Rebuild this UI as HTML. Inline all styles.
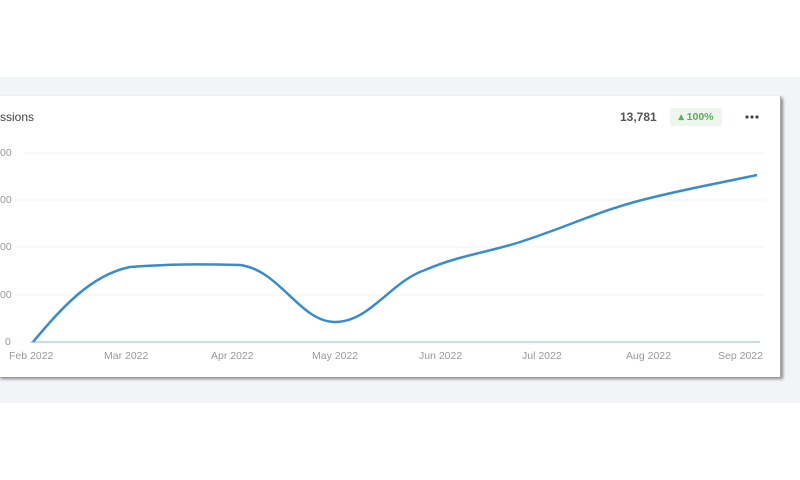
<!DOCTYPE html>
<html><head><style>
body{margin:0;width:800px;height:480px;background:#fff;position:relative;overflow:hidden;font-family:"Liberation Sans",sans-serif}
.band{position:absolute;left:0;top:77px;width:800px;height:326px;background:#f1f5f8}
.card{position:absolute;left:-2px;top:96px;width:782px;height:281px;background:#fff;box-shadow:2px 2px 3px #888;border-right:1px solid #aaa}
.t{position:absolute;font-size:12px;color:#444}
.ax{position:absolute;font-size:10.5px;color:#999}
</style></head><body>
<div class="band"></div>
<div class="card"></div>
<div class="t" style="left:0;top:110px">ssions</div>
<div class="t" style="left:620px;top:110px;font-weight:bold;color:#555">13,781</div>
<div style="position:absolute;left:670px;top:108px;width:52px;height:18px;background:#eef6ee;border-radius:2px;font-size:10.5px;color:#5cae5c;font-weight:bold;line-height:18px;text-align:center">▴ 100%</div>
<svg style="position:absolute;left:744px;top:114px" width="16" height="6"><circle cx="3" cy="3" r="1.6" fill="#444"/><circle cx="8" cy="3" r="1.6" fill="#444"/><circle cx="13" cy="3" r="1.6" fill="#444"/></svg>
<svg style="position:absolute;left:0;top:0" width="800" height="480">
<g stroke="#f0f0f0" stroke-width="1">
<line x1="25" y1="153" x2="765" y2="153"/><line x1="15" y1="200" x2="765" y2="200"/><line x1="15" y1="247" x2="765" y2="247"/><line x1="15" y1="295" x2="765" y2="295"/></g>
<line x1="30" y1="342" x2="760" y2="342" stroke="#c8dcf0" stroke-width="2"/>
<path d="M33,342 C60,310 90,275 130,267 C170,264 200,264 240,265 C280,270 300,322 335,322 C370,322 390,282 425,270 C460,255 490,252 520,242 C570,226 600,210 650,198 C690,188 720,183 757,175" fill="none" stroke="#3a8bc9" stroke-width="2.5"/>
</svg>
<div class="ax" style="left:0;top:147px">00</div>
<div class="ax" style="left:0;top:194px">00</div>
<div class="ax" style="left:0;top:241px">00</div>
<div class="ax" style="left:0;top:289px">00</div>
<div class="ax" style="left:5px;top:336px">0</div>
<div class="ax" style="left:9px;top:350px">Feb 2022</div>
<div class="ax" style="left:104px;top:350px">Mar 2022</div>
<div class="ax" style="left:211px;top:350px">Apr 2022</div>
<div class="ax" style="left:312px;top:350px">May 2022</div>
<div class="ax" style="left:419px;top:350px">Jun 2022</div>
<div class="ax" style="left:522px;top:350px">Jul 2022</div>
<div class="ax" style="left:626px;top:350px">Aug 2022</div>
<div class="ax" style="left:718px;top:350px">Sep 2022</div>
</body></html>
